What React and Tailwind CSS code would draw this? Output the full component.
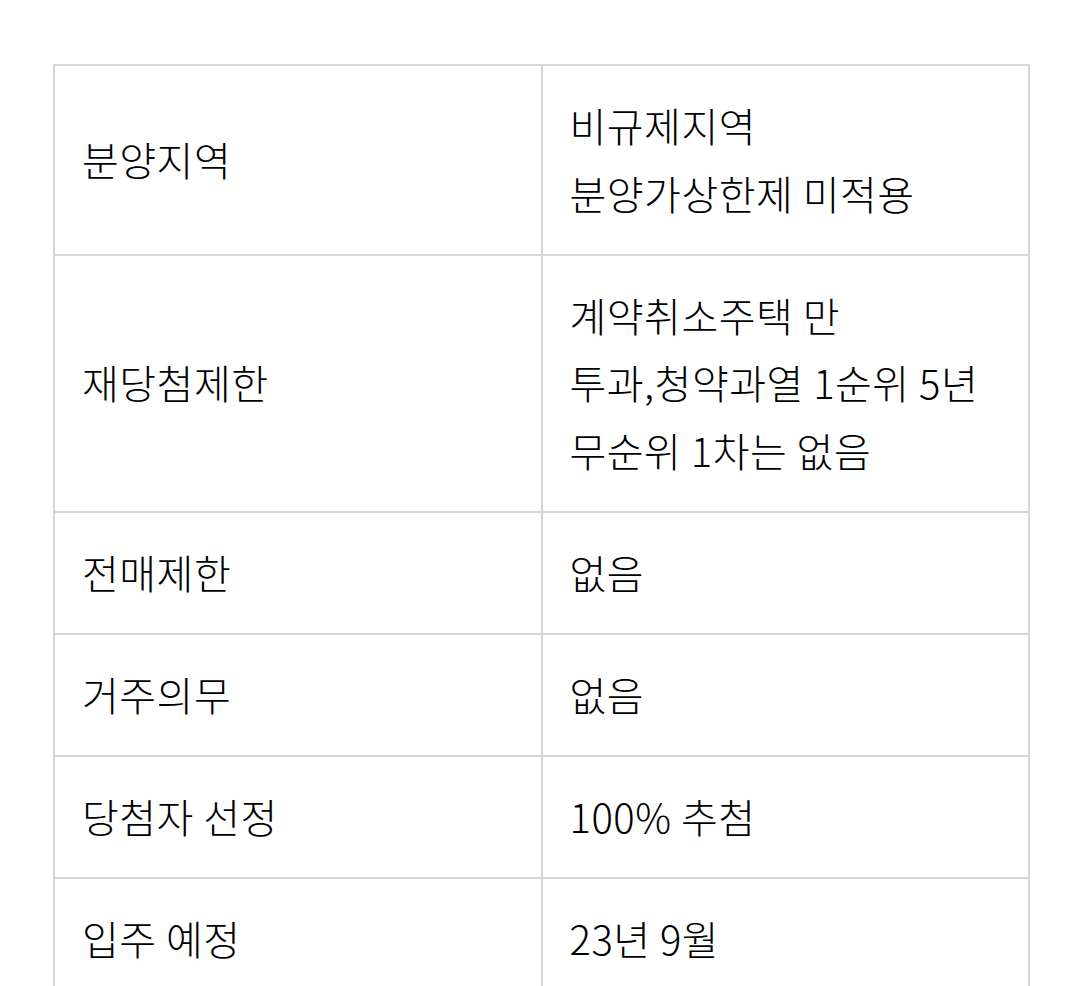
const rows = [
  { label: "분양지역", value: ["비규제지역", "분양가상한제 미적용"] },
  { label: "재당첨제한", value: ["계약취소주택 만", "투과,청약과열 1순위 5년", "무순위 1차는 없음"] },
  { label: "전매제한", value: ["없음"] },
  { label: "거주의무", value: ["없음"] },
  { label: "당첨자 선정", value: ["100% 추첨"] },
  { label: "입주 예정", value: ["23년 9월"] },
];

export default function App() {
  return (
    <div
      className="min-h-[986px] bg-white pl-[53px] pt-[64px] text-black"
      style={{ fontFamily: '"Noto Sans CJK KR", "Noto Sans", sans-serif' }}
    >
      <table className="w-[977px] table-fixed border-collapse text-[40px] font-light leading-[67.5px] tracking-[0.5px]">
        <tbody>
          {rows.map((r) => (
            <tr key={r.label}>
              <td className="w-1/2 border-2 border-[#d6d6d6] px-[27px] py-[26.25px] align-middle">
                {r.label}
              </td>
              <td className="w-1/2 border-2 border-[#d6d6d6] px-[27px] py-[26.25px] align-middle">
                {r.value.map((v) => (
                  <div key={v}>{v}</div>
                ))}
              </td>
            </tr>
          ))}
        </tbody>
      </table>
    </div>
  );
}
